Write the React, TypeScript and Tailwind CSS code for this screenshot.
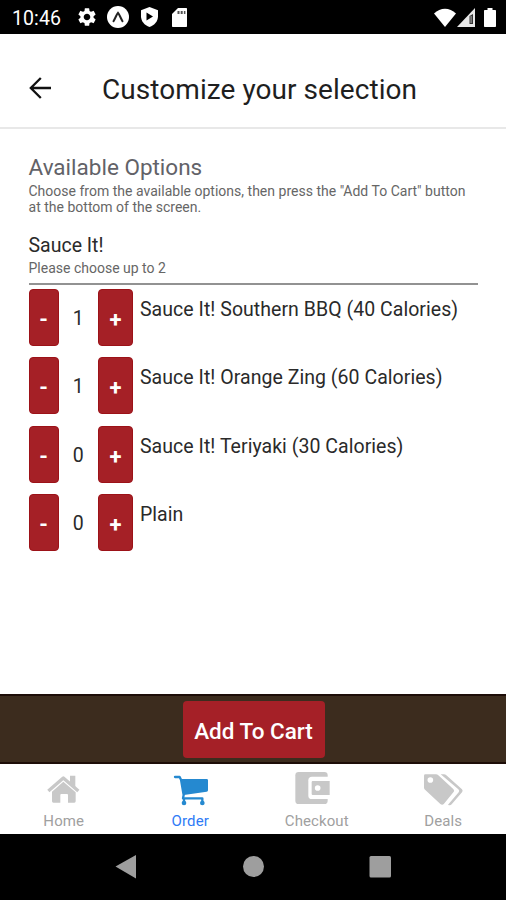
import { useState } from 'react'
import { MdSettings } from 'react-icons/md'

const sauces = [
    { name: 'Sauce It! Southern BBQ (40 Calories)', count: 1 },
    { name: 'Sauce It! Orange Zing (60 Calories)', count: 1 },
    { name: 'Sauce It! Teriyaki (30 Calories)', count: 0 },
    { name: 'Plain', count: 0 },
]

const MAX_SAUCES = 2

function HomeIcon() {
    return (
        <svg width="48" height="44" viewBox="-2 0 144 132" fill="#c8c8c8">
            <path d="M91 50V29h16v36z" />
            <path d="M26 75 71 36l45 39" fill="none" stroke="#c8c8c8" strokeWidth="10" strokeLinejoin="round" />
            <path d="M71 47 108 79v27q0 4-4 4H85V87q0-3-3-3H65q-3 0-3 3v23H41q-4 0-4-4V77z" />
        </svg>
    )
}

function CartIcon() {
    return (
        <svg width="48" height="44" viewBox="-1 0 144 132" fill="#2589d0">
            <path d="M26 33h14l4 8 8 46-2 10" fill="none" stroke="#2589d0" strokeWidth="7" strokeLinecap="round" strokeLinejoin="round" />
            <path d="M43 39h78q4 0 4 4v30q0 4-4 4.500L53 87z" />
            <path d="M53 110V97h55v13" fill="none" stroke="#2589d0" strokeWidth="7" strokeLinejoin="round" />
            <circle cx="53" cy="111" r="7" />
            <circle cx="108" cy="111" r="7" />
        </svg>
    )
}

function WalletIcon() {
    return (
        <svg width="48" height="44" viewBox="7 0 144 132">
            <rect x="17" y="18" width="97" height="96" rx="10" fill="#c8c8c8" />
            <path d="M120 32H67q-11 0-11 11v46q0 10 11 10h53z" fill="#fff" />
            <path d="M120 45H69q-3 0-3 3v36q0 3 3 3h51z" fill="#c8c8c8" />
            <circle cx="84" cy="66" r="8.500" fill="#fff" />
        </svg>
    )
}

function TagsIcon() {
    return (
        <svg width="48" height="44" viewBox="2 0 144 132" fill="#c8c8c8">
            <path d="M21 25h32q4 0 7 3l44 40q6 6 1 11l-28 34q-5 6-11 1L21 72q-4-3-4-7V29q0-4 4-4z" />
            <path d="M67 25h10q4 0 7 3l47 42q4 5 0 9l-31 36q-5 5-11 1l32-37q4-5-1-9z" />
            <circle cx="36" cy="42" r="8.500" fill="#fff" />
        </svg>
    )
}

const tabs = [
    { label: 'Home', icon: <HomeIcon /> },
    { label: 'Order', icon: <CartIcon /> },
    { label: 'Checkout', icon: <WalletIcon /> },
    { label: 'Deals', icon: <TagsIcon /> },
]

function StatusBar() {
    return (
        <div className="flex h-[34px] shrink-0 items-center bg-black pr-[10px] pl-3 text-white">
            <span className="w-[64px] pt-[3px] text-[19.5px] tracking-[0.1px]">10:46</span>
            <MdSettings className="size-[22px]" />
            <svg className="ml-[9px]" width="22" height="22" viewBox="0 0 22 22">
                <circle cx="11" cy="11" r="11" fill="#fff" />
                <path d="M6.500 15.200C8.500 12 9.500 8.500 11 6.800c1.500 1.700 2.500 5.200 4.500 8.400" fill="none" stroke="#222" strokeWidth="2" strokeLinecap="round" />
            </svg>
            <svg className="ml-[11px]" width="19" height="20" viewBox="0 0 19 20">
                <path d="M9.500 0 18 3.200v6c0 5-3.500 9-8.500 10.800C4.500 18.200 1 14.200 1 9.200v-6z" fill="#fff" />
                <path d="M6.500 5.500v8l6.500-4z" fill="#000" />
            </svg>
            <svg className="ml-[13px]" width="15" height="19" viewBox="0 0 15 19">
                <path d="M6 0h8c.6 0 1 .4 1 1v17c0 .6-.4 1-1 1H1c-.6 0-1-.4-1-1V6z" fill="#fff" />
                <path d="M5.500 3h2v3h-2zM8.700 3h2v3h-2zM11.900 3h1.500v3h-1.500z" fill="#555" />
            </svg>
            <div className="ml-auto flex items-center">
                <svg width="22" height="19" viewBox="0 0 22 19" fill="#fff">
                    <path d="M0 5.500C6.500-.800 15.500-.800 22 5.500L11 19z" />
                </svg>
                <svg className="ml-[1px]" width="19" height="19" viewBox="0 0 19 19">
                    <path d="M18 0v19H0z" fill="#e8e8e8" />
                    <path d="M12.500 8v8h3.500V6z" fill="#333" />
                    <path d="M13.500 8h1.200v7h-1.200z" fill="#999" />
                </svg>
                <svg className="ml-[8px]" width="12" height="19" viewBox="0 0 12 19" fill="#fff">
                    <path d="M3.500 0h5v2H11c.6 0 1 .4 1 1v15c0 .6-.4 1-1 1H1c-.6 0-1-.4-1-1V3c0-.6.4-1 1-1h2.500z" />
                </svg>
            </div>
        </div>
    )
}

export default function App() {
    const [counts, setCounts] = useState(sauces.map((s) => s.count))
    const [active, setActive] = useState('Order')

    const change = (index: number, delta: number) => {
        const next = counts.map((c, i) => (i === index ? Math.max(0, c + delta) : c))
        if (delta > 0 && next.reduce((a, b) => a + b, 0) > MAX_SAUCES) return
        setCounts(next)
    }

    return (
        <div className="flex h-[900px] w-[506px] flex-col overflow-hidden bg-white font-[Roboto,sans-serif] text-[#2a2a2a]">
            <StatusBar />

            {/* Header */}
            <header className="flex h-[95px] shrink-0 items-center border-b-2 border-[#e8e8e8] pt-[15px] pl-[29px]">
                <button aria-label="Back" className="w-[73px]">
                    <svg width="22" height="22" viewBox="0 0 22 22" fill="none" stroke="#111" strokeWidth="2.300">
                        <path d="M22 11H1.800M11.800 1 1.800 11l10 10" />
                    </svg>
                </button>
                <h1 className="pt-[3px] text-[28px] tracking-[0.06px] whitespace-nowrap text-[#1f1f1f]">Customize your selection</h1>
            </header>

            {/* Options */}
            <main className="flex-1 px-[28.5px] pt-[24px]">
                <h2 className="text-[22.5px] leading-[28px] whitespace-nowrap text-[#626268]">Available Options</h2>
                <p className="mt-[1.5px] text-[14px] leading-[16.5px] tracking-[0.01px] whitespace-nowrap text-[#666]">
                    Choose from the available options, then press the "Add To Cart" button
                    <br />
                    at the bottom of the screen.
                </p>
                <h3 className="mt-[17px] text-[19.5px] leading-[26px]">Sauce It!</h3>
                <p className="text-[14px] leading-[18px] text-[#666]">Please choose up to 2</p>
                <div className="mt-[6.5px] h-[2px] bg-[#929292]" />

                <div className="mt-[3.5px] flex flex-col gap-[11.5px]">
                    {sauces.map((sauce, index) => (
                        <div key={sauce.name} className="flex h-[57px]">
                            <button
                                onClick={() => change(index, -1)}
                                className="w-[30px] rounded-[4px] border border-[#9c1218] bg-[#a52026] pt-[4px] text-[22px] font-bold text-white"
                            >
                                -
                            </button>
                            <span className="w-[39.5px] text-center text-[19.5px] leading-[59px]">{counts[index]}</span>
                            <button
                                onClick={() => change(index, 1)}
                                className="w-[35px] rounded-[4px] border border-[#9c1218] bg-[#a52026] pt-[4px] text-[22px] font-bold text-white"
                            >
                                +
                            </button>
                            <span className="ml-[7px] pt-[8px] text-[19.5px] leading-[26px] tracking-[0.04px] whitespace-nowrap">{sauce.name}</span>
                        </div>
                    ))}
                </div>
            </main>

            {/* Add to cart */}
            <div className="flex h-[70px] shrink-0 items-center justify-center border-y-2 border-[#1d0d08] bg-[#3c2c1e] pt-px pl-px">
                <button className="h-[57px] w-[142px] rounded-[4px] bg-[#a52027] pt-[4px] text-[22.5px] font-medium whitespace-nowrap text-white">
                    Add To Cart
                </button>
            </div>

            {/* Tabs */}
            <nav className="grid h-[70px] shrink-0 grid-cols-4">
                {tabs.map((tab) => (
                    <button key={tab.label} onClick={() => setActive(tab.label)} className="flex flex-col items-center">
                        <span className="flex h-[48px] items-center justify-center">{tab.icon}</span>
                        <span
                            className={`pl-px text-[15px] leading-[19px] tracking-[0.1px] ${active === tab.label ? 'text-[#2f7bf6]' : 'text-[#a0a0a0]'}`}
                        >
                            {tab.label}
                        </span>
                    </button>
                ))}
            </nav>

            {/* System navigation */}
            <div className="h-[66px] shrink-0 bg-black">
                <svg width="506" height="66" viewBox="0 0 506 66" fill="#9e9e9e">
                    <path d="M115.500 32.500 136 21v23.500z" />
                    <circle cx="253.500" cy="32.500" r="10.500" />
                    <rect x="369.500" y="22" width="21.500" height="21.500" rx="1.500" />
                </svg>
            </div>
        </div>
    )
}
